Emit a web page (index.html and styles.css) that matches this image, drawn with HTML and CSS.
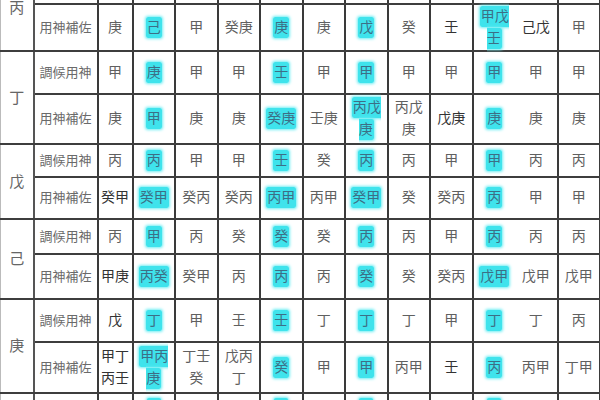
FILE: index.html
```html
<!DOCTYPE html>
<html lang="zh-Hant">
<head>
<meta charset="utf-8">
<title>調候用神表</title>
<link rel="stylesheet" href="styles.css">
</head>
<body>
<table class="tbl">
  <colgroup>
    <col class="c-stem"><col class="c-label"><col class="c-first">
    <col class="c-d"><col class="c-d"><col class="c-d"><col class="c-d"><col class="c-d">
    <col class="c-d"><col class="c-d"><col class="c-d"><col class="c-d"><col class="c-d"><col class="c-d">
  </colgroup>
  <tbody>
    <tr class="r-hide">
      <td class="stem" rowspan="2">丙</td><td class="label"></td>
      <td></td><td></td><td></td><td></td><td></td><td></td><td></td><td></td><td></td><td class="nl"></td><td class="nr"></td><td></td>
    </tr>
    <tr class="r-a sep">
      <td class="label">用神補佐</td>
      <td>庚</td><td><span class="hl">己</span></td><td>甲</td><td>癸庚</td><td><span class="hl">庚</span></td><td>庚</td><td><span class="hl">戊</span></td><td>癸</td><td class="dark">壬</td><td class="nl"><span class="hl">甲戊<br>壬</span></td><td class="nr dark">己戊</td><td>甲</td>
    </tr>

    <tr class="r-b">
      <td class="stem" rowspan="2">丁</td><td class="label">調候用神</td>
      <td>甲</td><td><span class="hl">庚</span></td><td>甲</td><td>甲</td><td><span class="hl">壬</span></td><td>甲</td><td><span class="hl">甲</span></td><td>甲</td><td>甲</td><td class="nl"><span class="hl">甲</span></td><td class="nr">甲</td><td>甲</td>
    </tr>
    <tr class="r-c sep">
      <td class="label">用神補佐</td>
      <td>庚</td><td><span class="hl">甲</span></td><td>庚</td><td>庚</td><td><span class="hl">癸庚</span></td><td>壬庚</td><td><span class="hl">丙戊<br>庚</span></td><td>丙戊<br>庚</td><td class="dark">戊庚</td><td class="nl"><span class="hl">庚</span></td><td class="nr">庚</td><td>庚</td>
    </tr>

    <tr class="r-d">
      <td class="stem" rowspan="2">戊</td><td class="label">調候用神</td>
      <td>丙</td><td><span class="hl">丙</span></td><td>甲</td><td>甲</td><td><span class="hl">壬</span></td><td>癸</td><td><span class="hl">丙</span></td><td>丙</td><td>甲</td><td class="nl"><span class="hl">甲</span></td><td class="nr">丙</td><td>丙</td>
    </tr>
    <tr class="r-e sep">
      <td class="label">用神補佐</td>
      <td class="dark">癸甲</td><td><span class="hl">癸甲</span></td><td>癸丙</td><td>癸丙</td><td><span class="hl">丙甲</span></td><td>丙甲</td><td><span class="hl">癸甲</span></td><td>癸</td><td>癸丙</td><td class="nl"><span class="hl">丙</span></td><td class="nr">甲</td><td>甲</td>
    </tr>

    <tr class="r-f">
      <td class="stem" rowspan="2">己</td><td class="label">調候用神</td>
      <td>丙</td><td><span class="hl">甲</span></td><td>丙</td><td>癸</td><td><span class="hl">癸</span></td><td>癸</td><td><span class="hl">丙</span></td><td>丙</td><td>甲</td><td class="nl"><span class="hl">丙</span></td><td class="nr">丙</td><td>丙</td>
    </tr>
    <tr class="r-g sep">
      <td class="label">用神補佐</td>
      <td class="dark">甲庚</td><td><span class="hl">丙癸</span></td><td>癸甲</td><td>丙</td><td><span class="hl">丙</span></td><td>丙</td><td><span class="hl">癸</span></td><td>癸</td><td>癸丙</td><td class="nl"><span class="hl">戊甲</span></td><td class="nr">戊甲</td><td>戊甲</td>
    </tr>

    <tr class="r-h">
      <td class="stem" rowspan="2">庚</td><td class="label">調候用神</td>
      <td class="dark">戊</td><td><span class="hl">丁</span></td><td>甲</td><td>壬</td><td><span class="hl">壬</span></td><td>丁</td><td><span class="hl">丁</span></td><td>丁</td><td>甲</td><td class="nl"><span class="hl">丁</span></td><td class="nr">丁</td><td>丙</td>
    </tr>
    <tr class="r-i sep">
      <td class="label">用神補佐</td>
      <td class="dark">甲丁<br>丙壬</td><td><span class="hl">甲丙<br>庚</span></td><td>丁壬<br>癸</td><td>戊丙<br>丁</td><td><span class="hl">癸</span></td><td>甲</td><td><span class="hl">甲</span></td><td>丙甲</td><td class="dark">壬</td><td class="nl"><span class="hl">丙</span></td><td class="nr">丙甲</td><td>丁甲</td>
    </tr>

    <tr class="r-j">
      <td class="stem"></td><td class="label"></td>
      <td></td><td class="top"><span class="hl-box"></span></td><td></td><td></td><td class="top"><span class="hl-box"></span></td><td></td><td class="top"><span class="hl-box"></span></td><td></td><td></td><td class="nl top"><span class="hl-box"></span></td><td class="nr"></td><td></td>
    </tr>
  </tbody>
</table>
</body>
</html>
```

FILE: styles.css
```css
html, body {
  margin: 0;
  padding: 0;
  background: #ffffff;
  overflow: hidden;
}

body {
  width: 600px;
  height: 400px;
  font-family: "Liberation Serif", "Noto Sans CJK TC", "Noto Sans CJK SC", serif;
  color: #555;
}

.tbl {
  margin-top: -37px;
  width: 600px;
  table-layout: fixed;
  border-collapse: collapse;
  border-left: 1px solid #bbb;
  border-right: 2px solid #444;
}

.c-stem { width: 33px; }
.c-label { width: 64px; }
.c-first { width: 35px; }
.c-d { width: 42.5px; }

.tbl td {
  border-top: 2px solid #3e3e3e;
  border-bottom: 2px solid #3e3e3e;
  border-left: 2px solid #3a3a3a;
  border-right: 2px solid #3a3a3a;
  padding: 0;
  text-align: center;
  vertical-align: middle;
  font-size: 14px;
  line-height: 22px;
  white-space: nowrap;
  color: #606060;
}

.tbl td.stem {
  border-left: 1px solid #bbb;
  border-right: 2px solid #555;
  font-size: 15px;
  color: #666;
}

.tbl td.label {
  font-size: 13px;
  color: #6a6a6a;
}

.tbl td.nl { border-right: none; }
.tbl td.nr { border-left: none; }
.tbl td.dark { color: #333; }
.tbl td.top { vertical-align: top; padding-top: 4px; }

.r-hide { height: 40px; }
.r-a { height: 47px; }
.r-b { height: 43px; }
.r-c { height: 50px; }
.r-d { height: 33px; }
.r-e { height: 42px; }
.r-f { height: 35px; }
.r-g { height: 45px; }
.r-h { height: 43px; }
.r-i { height: 51px; }
.r-j { height: 40px; }

.hl {
  background: #3fe3ec;
  color: #3c6f86;
  padding: 3px 1px;
  border-radius: 2px;
  box-shadow: 0 0 3px 1px #6eeef3;
  line-height: 22px;
}

.hl-box {
  display: inline-block;
  width: 14px;
  height: 20px;
  background: #3fe3ec;
  border-radius: 2px;
  box-shadow: 0 0 3px 1px #6eeef3;
}
```
